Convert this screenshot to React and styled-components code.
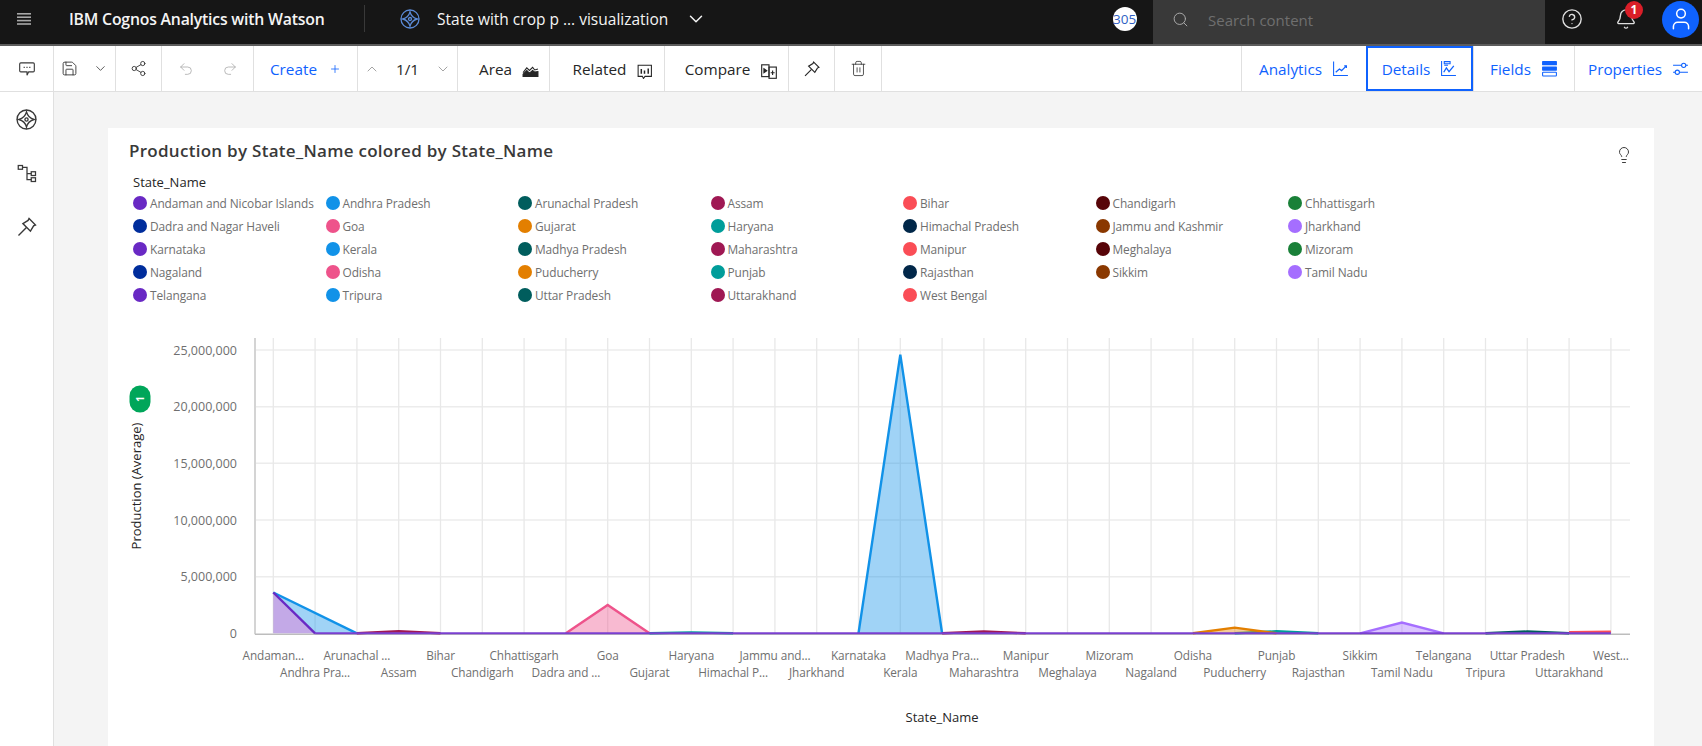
import React from 'react';
import styled, { createGlobalStyle } from 'styled-components';
import { Save, ChevronDown, ChevronUp, Share2, Undo2, Redo2, Plus, Trash2, Search, CircleHelp, Bell, User, Lightbulb } from 'lucide-react';

const FONT = '"Open Sans", "Liberation Sans", sans-serif';

const GlobalStyle = createGlobalStyle`
  html, body { margin: 0; padding: 0; height: 100%; overflow: hidden; background: #f4f4f4; }
  body { font-family: ${FONT}; }
  * { box-sizing: border-box; }
`;

const Page = styled.div`
  width: 1702px;
  height: 746px;
  display: flex;
  flex-direction: column;
  overflow: hidden;
`;

/* top bar */
const TopBar = styled.header`
  height: 46px;
  flex: none;
  display: flex;
  align-items: stretch;
  background: #161616;
  border-bottom: 2px solid #5c5c5c;
  color: #f4f4f4;
`;
const Burger = styled.div`
  width: 48px;
  padding-bottom: 6px;
  display: flex;
  align-items: center;
  justify-content: center;
  color: #a8a8a8;
`;
const Brand = styled.div`
  margin-left: 21px;
  width: 295px;
  padding-bottom: 6px;
  display: flex;
  align-items: center;
  font-size: 15.8px;
  font-weight: 600;
  letter-spacing: -0.2px;
  white-space: nowrap;
`;
const Divider = styled.div`
  width: 1px;
  height: 27px;
  margin-top: 5px;
  background: #393939;
`;
const ViewName = styled.div`
  margin-left: 35px;
  padding-bottom: 6px;
  display: flex;
  align-items: center;
  gap: 17px;
  font-size: 15.5px;
  color: #f4f4f4;
  white-space: nowrap;
`;
const Counter = styled.div`
  margin: -6px 16px 0 auto;
  align-self: center;
  width: 24px;
  height: 24px;
  border-radius: 50%;
  background: #fff;
  color: #2f5fc4;
  font-size: 13.5px;
  line-height: 24px;
  white-space: nowrap;
`;
const SearchBox = styled.div`
  width: 392px;
  padding: 0 0 5px 19px;
  display: flex;
  align-items: center;
  gap: 19px;
  background: #393939;
  color: #a8a8a8;
  font-size: 15px;
  span { color: #6f6f6f; }
`;
const HeadBtn = styled.div`
  position: relative;
  width: 54px;
  padding-bottom: 6px;
  display: flex;
  align-items: center;
  justify-content: center;
  color: #e0e0e0;
`;
const Badge = styled.span`
  position: absolute;
  top: 1px;
  left: 26px;
  width: 18px;
  height: 18px;
  border-radius: 50%;
  background: #da1e28;
  color: #fff;
  font-size: 12px;
  font-weight: 700;
  line-height: 18px;
  text-align: center;
`;
const Avatar = styled.div`
  margin: -6px 3px 0 9px;
  align-self: center;
  width: 37px;
  height: 37px;
  border-radius: 50%;
  background: #0f62fe;
  color: #fff;
  display: flex;
  align-items: center;
  justify-content: center;
`;

/* toolbar */
const ToolBar = styled.div`
  height: 46px;
  flex: none;
  display: flex;
  background: #fff;
  border-bottom: 1px solid #e0e0e0;
`;
const Cell = styled.div`
  width: ${p => p.$w}px;
  flex: none;
  display: flex;
  align-items: center;
  justify-content: center;
  gap: ${p => p.$gap ?? 10}px;
  padding-left: ${p => p.$shift ?? 0}px;
  border-right: 1px solid #e0e0e0;
  font-size: 15.3px;
  white-space: nowrap;
  color: ${p => (p.$link ? '#0f62fe' : '#262626')};
  svg { flex: none; }
`;
const RightCell = styled(Cell)`
  border-right: none;
  border-left: ${p => (p.$active ? '0' : '1px solid #e0e0e0')};
  ${p => p.$active && 'border: 2px solid #0f62fe; margin-left: 0;'}
`;
const Spacer = styled.div`
  flex: 1;
`;
const Faded = styled.span`
  display: inline-flex;
  color: ${p => p.$c || '#a8a8a8'};
`;
const LowIcon = styled.span`
  display: inline-flex;
  margin-top: 4px;
`;

/* body */
const Body = styled.div`
  flex: 1;
  display: flex;
  min-height: 0;
`;
const SideBar = styled.aside`
  width: 54px;
  flex: none;
  display: flex;
  flex-direction: column;
  align-items: center;
  gap: 33px;
  padding-top: 17px;
  background: #fff;
  border-right: 1px solid #e0e0e0;
  color: #393939;
`;
const Main = styled.main`
  flex: 1;
  padding: 36px 48px 0 54px;
`;
const Card = styled.section`
  height: 100%;
  background: #fff;
`;
const CardHead = styled.div`
  display: flex;
  justify-content: space-between;
  padding: 12px 21px 0 21px;
  color: #393939;
  svg { margin: 6px 0 -2px; }
`;
const Title = styled.h2`
  margin: 0;
  font-size: 17px;
  line-height: 22px;
  font-weight: 600;
  letter-spacing: 0.28px;
  color: #393939;
`;
const LegendTitle = styled.div`
  margin: 11px 0 0 25px;
  font-size: 13px;
  line-height: 19px;
  color: #262626;
`;
const Legend = styled.div`
  display: grid;
  grid-template-columns: repeat(7, 192.5px);
  grid-auto-rows: 22.95px;
  padding-left: 25px;
`;
const LegendItem = styled.div`
  display: flex;
  align-items: center;
  gap: 3px;
  font-size: 11.9px;
  letter-spacing: -0.1px;
  color: #6f6f6f;
  white-space: nowrap;
`;
const Dot = styled.i`
  width: 14px;
  height: 14px;
  flex: none;
  border-radius: 50%;
  background: ${p => p.$c};
`;
const ChartSvg = styled.svg`
  display: block;
  margin-top: 13px;
  font-family: ${FONT};
`;

const PALETTE = ['#6929c4', '#1192e8', '#005d5d', '#9f1853', '#fa4d56', '#570408', '#198038', '#002d9c', '#ee538b', '#e37f00', '#009d9a', '#012749', '#8a3800', '#a56eff'];
const STATES = ['Andaman and Nicobar Islands', 'Andhra Pradesh', 'Arunachal Pradesh', 'Assam', 'Bihar', 'Chandigarh', 'Chhattisgarh', 'Dadra and Nagar Haveli', 'Goa', 'Gujarat', 'Haryana', 'Himachal Pradesh', 'Jammu and Kashmir', 'Jharkhand', 'Karnataka', 'Kerala', 'Madhya Pradesh', 'Maharashtra', 'Manipur', 'Meghalaya', 'Mizoram', 'Nagaland', 'Odisha', 'Puducherry', 'Punjab', 'Rajasthan', 'Sikkim', 'Tamil Nadu', 'Telangana', 'Tripura', 'Uttar Pradesh', 'Uttarakhand', 'West Bengal'];
const XLABELS = ['Andaman...', 'Andhra Pra...', 'Arunachal ...', 'Assam', 'Bihar', 'Chandigarh', 'Chhattisgarh', 'Dadra and ...', 'Goa', 'Gujarat', 'Haryana', 'Himachal P...', 'Jammu and...', 'Jharkhand', 'Karnataka', 'Kerala', 'Madhya Pra...', 'Maharashtra', 'Manipur', 'Meghalaya', 'Mizoram', 'Nagaland', 'Odisha', 'Puducherry', 'Punjab', 'Rajasthan', 'Sikkim', 'Tamil Nadu', 'Telangana', 'Tripura', 'Uttar Pradesh', 'Uttarakhand', 'West...'];
const TICKS = [0, 5, 10, 15, 20, 25];

// chart geometry, relative to the svg (which starts at 108,320 on the page)
const X0 = 165.3;
const STEP = 41.8;
const Y0 = 313.3;
const PER_M = 11.33;
const px = i => X0 + i * STEP;
const py = m => Y0 - m * PER_M;

// colour index, points as [state index, production in millions], and where the fill starts on the baseline
const SERIES = [
  { c: 1, pts: [[0, 3.6], [2, 0]], base: 1 },
  { c: 0, pts: [[0, 3.6], [1, 0]], base: 0 },
  { c: 3, pts: [[2, 0], [3, 0.18], [4, 0]] },
  { c: 8, pts: [[7, 0], [8, 2.5], [9, 0]] },
  { c: 10, pts: [[9, 0], [10, 0.08], [11, 0]] },
  { c: 1, pts: [[14, 0], [15, 24.6], [16, 0]] },
  { c: 3, pts: [[16, 0], [17, 0.16], [18, 0]] },
  { c: 10, pts: [[23, 0], [24, 0.18], [25, 0]] },
  { c: 9, pts: [[22, 0], [23, 0.5], [24, 0]] },
  { c: 13, pts: [[26, 0], [27, 0.95], [28, 0]] },
  { c: 2, pts: [[29, 0], [30, 0.16], [31, 0]] },
  { c: 4, pts: [[31, 0.1], [32, 0.14]] },
];

const I = ({ s = 16, children, ...rest }) => (
  <svg width={s} height={s} viewBox="0 0 16 16" fill="none" stroke="currentColor" strokeWidth="1" {...rest}>{children}</svg>
);

const DiamondIcon = ({ s = 20, color }) => (
  <svg width={s} height={s} viewBox="0 0 20 20" fill="none" stroke={color || 'currentColor'} strokeWidth="1.3">
    <circle cx="10" cy="10" r="9" />
    <path d="M10 2.8Q11.5 8.5 17.2 10 11.5 11.5 10 17.2 8.5 11.5 2.8 10 8.5 8.5 10 2.8Z" />
    <circle cx="10" cy="10" r="1.5" />
  </svg>
);
const TreeIcon = () => (
  <I s={20}>
    <rect x="1" y="2" width="3.4" height="3" />
    <rect x="11.4" y="7" width="3.4" height="3" />
    <rect x="11.4" y="11.8" width="3.4" height="3" />
    <path d="M4.4 3.5H8V13.3H11.4M8 8.5H11.4" />
  </I>
);
const PinIcon = ({ s = 18 }) => (
  <I s={s}>
    <path d="M9.5 1.8 14.2 6.5 12.8 7.2 10.5 11 5 5.5 8.8 3.2Z" />
    <path d="M7.6 8.4 1.8 14.2" />
  </I>
);
const CommentIcon = () => (
  <I s={18}>
    <path d="M2.5 2.5H13.5Q14.5 2.5 14.5 3.5V9.5Q14.5 10.5 13.5 10.5H9.5L8 13.5V10.5H2.5Q1.5 10.5 1.5 9.5V3.5Q1.5 2.5 2.5 2.5Z" />
    <path d="M5 6.5H6M7.5 6.5H8.5M10 6.5H11" />
  </I>
);
const AreaIcon = () => (
  <I s={17}>
    <path d="M1 10 4.5 5.5 7 8 10 5 12 7.5 15 6.5" />
    <path d="M1 13.5V11.5L4.5 8 7 10.5 10 8 12 9.5 15 9V13.5Z" fill="currentColor" />
  </I>
);
const RelatedIcon = () => (
  <I s={17}>
    <path d="M6 13.5H2V3H14.5V13.5H8.5L7 15.5Z" />
    <path d="M5 6.5V11M8 8V11M11.5 6V11" strokeWidth="1.4" />
  </I>
);
const CompareIcon = () => (
  <I s={18}>
    <rect x="1.5" y="2.5" width="6.5" height="10.5" />
    <rect x="8" y="4.5" width="6.5" height="10" />
    <path d="M3.5 6 6 7.8 3.5 9.5Z" fill="currentColor" />
    <path d="M11.2 7.5V11.5M9.5 9.5H13" />
  </I>
);
const AnalyticsIcon = () => (
  <I s={17}>
    <path d="M1.5 1.5V14.5H15" />
    <path d="M3.5 11.5 7 8.5 9 10 13.5 5.5" strokeWidth="1.2" />
    <path d="M11.5 5.5H13.5V7.5" strokeWidth="1.2" />
  </I>
);
const DetailsIcon = () => (
  <I s={17}>
    <path d="M1.5 1V14.5H15" />
    <path d="M4 1.5H9.5V3.5H4ZM4 5H7.5" />
    <path d="M3.5 11.5 6 7.5 8.5 11 13 5.5" strokeWidth="1.2" />
  </I>
);
const FieldsIcon = () => (
  <I s={17}>
    <rect x="1" y="1" width="14" height="4" rx="0.6" fill="currentColor" stroke="none" />
    <rect x="1" y="6" width="14" height="4" rx="0.6" fill="currentColor" stroke="none" />
    <rect x="1.5" y="11.5" width="13" height="3.5" rx="0.6" />
  </I>
);
const PropsIcon = () => (
  <I s={17}>
    <path d="M1 5H9M13 5H15M1 11.5H3M7 11.5H15" />
    <circle cx="11" cy="5" r="2" />
    <circle cx="5" cy="11.5" r="2" />
  </I>
);

const Chart = () => (
  <ChartSvg width="1546" height="426" viewBox="0 0 1546 426">
    {TICKS.map(t => (
      <g key={t}>
        {t > 0 && <line x1="147" x2="1522" y1={py(t)} y2={py(t)} stroke="#ececec" strokeWidth="1.5" />}
        <text x="129" y={py(t) + 4.5} textAnchor="end" fontSize="12.5" fill="#6f6f6f">
          {t === 0 ? '0' : `${t},000,000`}
        </text>
      </g>
    ))}
    {STATES.map((s, i) => (
      <line key={s} x1={px(i)} x2={px(i)} y1="18" y2={Y0} stroke="#e8e8e8" strokeWidth="1.3" />
    ))}
    <line x1="147" x2="147" y1="18" y2={Y0 + 1} stroke="#d4d4d4" strokeWidth="2" />
    <line x1="147" x2="1522" y1={Y0 + 1} y2={Y0 + 1} stroke="#bdbdbd" strokeWidth="1.5" />

    {SERIES.map(({ c, pts, base }, n) => {
      const line = pts.map(([i, m]) => `${px(i)},${py(m)}`).join(' ');
      const start = px(base ?? pts[0][0]);
      const area = `${start},${Y0} ${line} ${px(pts[pts.length - 1][0])},${Y0}`;
      return (
        <g key={n}>
          <polygon points={area} fill={PALETTE[c]} fillOpacity="0.4" />
          <polyline points={line} fill="none" stroke={PALETTE[c]} strokeWidth="2.4" />
        </g>
      );
    })}
    <line x1={px(1)} x2={px(32)} y1={Y0} y2={Y0} stroke="#7a3fd0" strokeWidth="2" />

    {XLABELS.map((l, i) => (
      <text key={i} x={px(i)} y={i % 2 ? 357 : 340} textAnchor="middle" fontSize="11.8" letterSpacing="-0.1" fill="#6f6f6f">{l}</text>
    ))}
    <text x="834" y="402" textAnchor="middle" fontSize="13" fill="#262626">State_Name</text>

    <text transform="translate(33 166) rotate(-90)" textAnchor="middle" fontSize="13" fill="#262626">Production (Average)</text>
    <rect x="21.5" y="65.5" width="21" height="27" rx="10.5" fill="#00a65a" />
    <text transform="translate(35.5 79) rotate(-90)" textAnchor="middle" fontSize="10" fontWeight="700" fill="#fff">1</text>
  </ChartSvg>
);

export default function App() {
  return (
    <Page>
      <GlobalStyle />
      <TopBar>
        <Burger>
          <svg width="14" height="12" viewBox="0 0 14 12" fill="currentColor">
            <rect y="0" width="14" height="1.6" />
            <rect y="3.4" width="14" height="1.6" />
            <rect y="6.8" width="14" height="1.6" />
            <rect y="10.2" width="14" height="1.6" />
          </svg>
        </Burger>
        <Brand>IBM Cognos Analytics with Watson</Brand>
        <Divider />
        <ViewName>
          <DiamondIcon color="#5b8ad6" />
          <span>State with crop p ... visualization</span>
          <ChevronDown size={22} strokeWidth={1.6} />
        </ViewName>
        <Counter>305</Counter>
        <SearchBox>
          <Search size={17} strokeWidth={1.4} />
          <span>Search content</span>
        </SearchBox>
        <HeadBtn><CircleHelp size={22} strokeWidth={1.5} /></HeadBtn>
        <HeadBtn>
          <Bell size={22} strokeWidth={1.5} />
          <Badge>1</Badge>
        </HeadBtn>
        <Avatar><User size={26} strokeWidth={1.4} /></Avatar>
      </TopBar>

      <ToolBar>
        <Cell $w={54}><Faded $c="#393939"><CommentIcon /></Faded></Cell>
        <Cell $w={62} $gap={15}>
          <Faded $c="#393939"><Save size={17} strokeWidth={1.3} /></Faded>
          <Faded $c="#393939"><ChevronDown size={15} strokeWidth={1.3} /></Faded>
        </Cell>
        <Cell $w={46}><Faded $c="#393939"><Share2 size={17} strokeWidth={1.3} /></Faded></Cell>
        <Cell $w={92} $gap={28}>
          <Faded><Undo2 size={16} strokeWidth={1.2} /></Faded>
          <Faded><Redo2 size={16} strokeWidth={1.2} /></Faded>
        </Cell>
        <Cell $w={104} $link $gap={12}>Create <Plus size={12} strokeWidth={1.6} /></Cell>
        <Cell $w={100} $gap={16}>
          <Faded $c="#8d8d8d"><ChevronUp size={16} strokeWidth={1.2} /></Faded>
          1/1
          <Faded $c="#8d8d8d"><ChevronDown size={16} strokeWidth={1.2} /></Faded>
        </Cell>
        <Cell $w={92} $shift={11}>Area <LowIcon><AreaIcon /></LowIcon></Cell>
        <Cell $w={115} $shift={12}>Related <LowIcon><RelatedIcon /></LowIcon></Cell>
        <Cell $w={124} $shift={10}>Compare <LowIcon><CompareIcon /></LowIcon></Cell>
        <Cell $w={46}><PinIcon /></Cell>
        <Cell $w={47}><Faded $c="#393939"><Trash2 size={17} strokeWidth={1.2} /></Faded></Cell>
        <Spacer />
        <RightCell $w={125} $link>Analytics <AnalyticsIcon /></RightCell>
        <RightCell $w={107} $link $active>Details <DetailsIcon /></RightCell>
        <RightCell $w={101} $link>Fields <FieldsIcon /></RightCell>
        <RightCell $w={128} $link>Properties <PropsIcon /></RightCell>
      </ToolBar>

      <Body>
        <SideBar>
          <DiamondIcon s={21} />
          <TreeIcon />
          <PinIcon s={22} />
        </SideBar>
        <Main>
          <Card>
            <CardHead>
              <Title>Production by State_Name colored by State_Name</Title>
              <Lightbulb size={18} strokeWidth={1.3} />
            </CardHead>
            <LegendTitle>State_Name</LegendTitle>
            <Legend>
              {STATES.map((s, i) => (
                <LegendItem key={s}><Dot $c={PALETTE[i % 14]} />{s}</LegendItem>
              ))}
            </Legend>
            <Chart />
          </Card>
        </Main>
      </Body>
    </Page>
  );
}
